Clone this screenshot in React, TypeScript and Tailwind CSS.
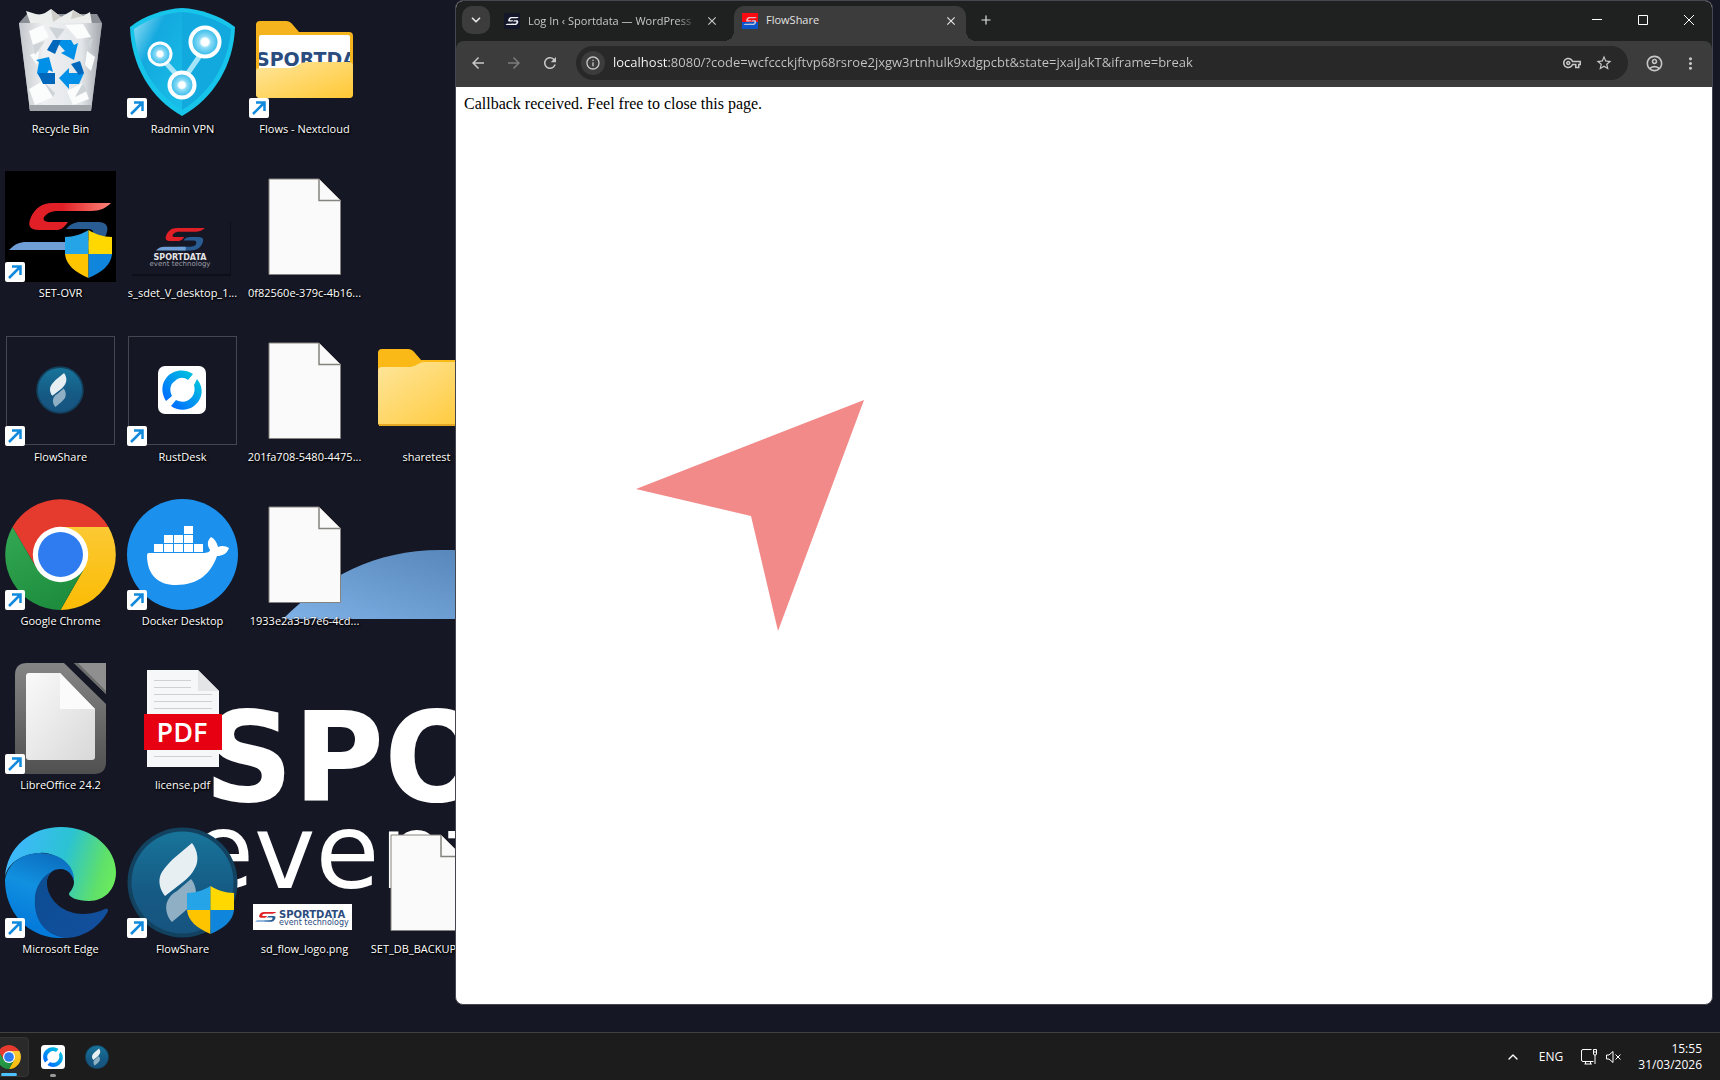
import type { ReactNode } from "react";
import {
  MdArrowBack,
  MdArrowForward,
  MdClose,
  MdInfoOutline,
  MdMoreVert,
  MdOutlineAccountCircle,
  MdOutlineVpnKey,
  MdRefresh,
  MdStarBorder,
} from "react-icons/md";
import { ChevronDown, ChevronUp, Plus } from "lucide-react";

const URL_TEXT =
  "localhost:8080/?code=wcfccckjftvp68rsroe2jxgw3rtnhulk9xdgpcbt&state=jxaiJakT&iframe=break";

/* ---------- shared drawings ---------- */

function SportMark({ red = "#e01f26", blue = "#2a5c94", tail = "#6f9fd6" }) {
  return (
    <>
      <path
        d="M106 0 H48 C36 0 30 6 26 14 C22 23 25 27 34 27 H52 C57 27 60 23 63 19 H44 C38 19 37 15 41 12 C44 9 48 8 52 8 H86 C95 8 101 5 106 0Z"
        fill={red}
      />
      <path
        d="M61 26 C66 21 69 19 76 19 H92 C103 19 104 25 101 32 C96 43 88 47 76 47 H50 V39 H76 C84 39 88 36 88 32 C89 28 87 26 83 26Z"
        fill={blue}
      />
      <path d="M4 47 C10 41 14 39 22 39 H66 V47Z" fill={tail} />
    </>
  );
}

function UacShield({ x, y }: { x: number; y: number }) {
  return (
    <g transform={`translate(${x} ${y})`}>
      <path d="M23.5 0 C17 4 9 7 0 7 V24 H23.5Z" fill="#25a5e8" />
      <path d="M23.5 0 C30 4 38 7 47 7 V24 H23.5Z" fill="#ffd800" />
      <path d="M0 24 H23.5 V48 C10 42 1 35 0 24Z" fill="#ffc400" />
      <path d="M47 24 H23.5 V48 C37 42 46 35 47 24Z" fill="#0f86dc" />
    </g>
  );
}

function Tile({ children }: { children: ReactNode }) {
  return (
    <svg viewBox="0 0 111 111" className="block size-full" aria-hidden="true">
      {children}
    </svg>
  );
}

/* ---------- desktop icons ---------- */

function RecycleBin() {
  return (
    <Tile>
      <defs>
        <linearGradient id="bin" x1="0" x2="1">
          <stop offset="0" stopColor="#c3c6cb" />
          <stop offset="0.3" stopColor="#eef0f2" />
          <stop offset="0.75" stopColor="#e3e6e9" />
          <stop offset="1" stopColor="#a2a6ac" />
        </linearGradient>
      </defs>
      <path d="M14 16 L22 7 H92 L97 16 L86 104 H25Z" fill="#8a8f96" />
      <path d="M21 4 L34 8 L40 6 L46 2 L56 10 L68 3 L78 9 L85 5 L87 17 L80 24 H28Z" fill="#eceeee" />
      <path d="M46 2 L56 10 L48 15Z M68 3 L78 9 L66 12Z" fill="#cfcdc8" />
      <path d="M14 16 H97 L86 104 H25Z" fill="url(#bin)" />
      <path
        d="M24 24 L38 18 L44 30 L28 38Z M60 18 L78 17 L86 30 L72 32Z M82 44 L90 50 L86 64 L80 58Z M24 82 L38 74 L48 90 L30 98Z M62 84 L78 76 L84 92 L68 98Z M25 48 L34 44 L32 58Z"
        fill="#fbfcfc"
      />
      <path
        d="M44 20 L60 22 L52 32Z M80 34 L88 32 L85 42Z M38 74 L50 86 L48 90Z M78 76 L70 90 L82 84Z M28 38 L40 34 L30 48Z"
        fill="#cdd3d6"
      />
      <path d="M24 98 H86 L86 104 H25Z" fill="#a0a5a9" />
      <path d="M50 33 H66 L69 38 L73 36 L69 53 L56 46 L60 44Z" fill="#0090e8" />
      <path d="M48 33 H56 L50 47 L42 43Z" fill="#0067bb" />
      <path d="M31 53 L44 50 L48 65 L44 63 L40 70 L43 77 H39 L32 66 L34 55Z" fill="#0090e8" />
      <path d="M33 66 H50 V77 H38Z" fill="#0067bb" />
      <path d="M54 71 L64 61 V66 H79 L74 77 H64 V82Z" fill="#0090e8" />
      <path d="M66 57 L75 54 L79 66 L74 68Z" fill="#0067bb" />
    </Tile>
  );
}

function RadminVpn() {
  return (
    <Tile>
      <defs>
        <linearGradient id="radmin" x1="0" y1="0" x2="1" y2="1">
          <stop offset="0" stopColor="#9fe4f8" />
          <stop offset="0.35" stopColor="#14a9df" />
          <stop offset="1" stopColor="#19bfe8" />
        </linearGradient>
        <radialGradient id="node">
          <stop offset="0" stopColor="#ffffff" />
          <stop offset="0.25" stopColor="#ffffff" />
          <stop offset="0.4" stopColor="#8fdcf6" />
          <stop offset="1" stopColor="#25b6e8" />
        </radialGradient>
      </defs>
      <path
        d="M55 1 C38 2 18 8 3 20 C4 58 24 92 55 109 C86 92 107 58 108 20 C92 8 73 2 55 1Z"
        fill="#17c5ea"
      />
      <path d="M55 5 C39 6 21 12 7 22 C9 56 27 86 55 103Z" fill="url(#radmin)" />
      <path d="M55 5 C71 6 90 12 104 22 C102 56 83 86 55 103Z" fill="#12a9df" />
      <path d="M39 56 L50 68 M72 50 L61 66" stroke="#a6e4f8" strokeWidth="5" />
      <circle cx="33" cy="47" r="11" fill="url(#node)" stroke="#fff" strokeWidth="3" />
      <circle cx="78" cy="35" r="14.5" fill="url(#node)" stroke="#fff" strokeWidth="4" />
      <circle cx="55" cy="78" r="12.5" fill="url(#node)" stroke="#fff" strokeWidth="4" />
    </Tile>
  );
}

function Folder({ preview = false }: { preview?: boolean }) {
  return (
    <Tile>
      <defs>
        <linearGradient id="folder" x1="0" y1="0" x2="1" y2="1">
          <stop offset="0" stopColor="#ffe69c" />
          <stop offset="1" stopColor="#ffc834" />
        </linearGradient>
        <clipPath id="folderPreview">
          <rect x="10" y="28" width="91" height="36" />
        </clipPath>
      </defs>
      <path
        d="M7 18 Q7 14 11 14 H37 Q41 14 44 18 L50 25 H100 Q104 25 104 29 V87 Q104 91 100 91 H11 Q7 91 7 87Z"
        fill={preview ? "#f5b31d" : "#fbb917"}
      />
      {preview ? (
        <>
          <rect x="10" y="28" width="91" height="40" rx="2" fill="#fff" />
          <text
            x="7"
            y="59"
            clipPath="url(#folderPreview)"
            className="fill-[#2b4c7e] font-['DejaVu_Sans'] text-[19px] font-bold"
          >
            SPORTDATA
          </text>
          <path
            d="M7 64 Q7 61 11 61 H40 Q45 61 49 58 Q53 55 58 55 H100 Q104 55 104 59 V87 Q104 91 100 91 H11 Q7 91 7 87Z"
            fill="url(#folder)"
          />
        </>
      ) : (
        <>
          <path
            d="M7 36 Q7 32 11 32 H39 Q43 32 47 29 Q50 27 54 27 H104 V87 Q104 91 100 91 H11 Q7 91 7 87Z"
            fill="url(#folder)"
          />
          <path d="M8 90 H103" stroke="#e5a823" strokeWidth="2" />
        </>
      )}
    </Tile>
  );
}

function SetOvr() {
  return (
    <Tile>
      <defs>
        <linearGradient id="setRed" x1="0" x2="1">
          <stop offset="0.4" stopColor="#e01f26" />
          <stop offset="1" stopColor="#ff8478" />
        </linearGradient>
      </defs>
      <rect width="111" height="111" fill="#000" />
      <g transform="translate(0 32)">
        <SportMark red="url(#setRed)" />
      </g>
      <UacShield x={60} y={59} />
    </Tile>
  );
}

function SportCard() {
  return (
    <Tile>
      <rect x="5" y="51" width="99" height="54" fill="#0e0f19" />
      <rect x="3" y="49" width="100" height="54" fill="#151724" />
      <g transform="translate(27 57) scale(0.48)">
        <SportMark />
      </g>
      <text x="53" y="89" textAnchor="middle" className="fill-zinc-200 font-['DejaVu_Sans'] text-[8px] font-bold">
        SPORTDATA
      </text>
      <text x="53" y="95" textAnchor="middle" className="fill-zinc-400 font-['DejaVu_Sans'] text-[7px]">
        event technology
      </text>
    </Tile>
  );
}

function BlankFile() {
  return (
    <Tile>
      <path d="M20 8 H70 L91.5 29.5 V103.5 H20Z" fill="#fafafa" stroke="#85837f" />
      <path d="M70 8 V29.5 H91.5" fill="#fafafa" stroke="#85837f" strokeWidth="1.5" />
    </Tile>
  );
}

function FlowShareDisc() {
  return (
    <>
      <circle cx="55.5" cy="55.5" r="55" fill="#12425f" />
      <circle cx="55.5" cy="55.5" r="51" fill="url(#flowDisc)" />
      <path d="M65 16 C71 24 72 34 68 41 C65 47 61 51 56 55 L38 69 C33 63 30 53 35 45 C38 40 42 36 46 32Z" fill="#e8eff3" />
      <path d="M64 52 C69 58 70 66 68 72 C66 77 62 80 58 84 L45 95 C40 90 37 80 41 73 C43 69 46 66 50 64Z" fill="#8fb0c4" />
      <defs>
        <linearGradient id="flowDisc" x1="0" y1="0" x2="0" y2="1">
          <stop offset="0" stopColor="#18749a" />
          <stop offset="0.6" stopColor="#155a84" />
          <stop offset="1" stopColor="#175480" />
        </linearGradient>
      </defs>
    </>
  );
}

function RustDeskLogo() {
  return (
    <>
      <defs>
        <linearGradient id="rust" x1="0" y1="1" x2="1" y2="0">
          <stop offset="0.1" stopColor="#0071ff" />
          <stop offset="1" stopColor="#00c6dc" />
        </linearGradient>
      </defs>
      <rect width="48" height="48" rx="7" fill="#fff" />
      <path
        d="M39 13 C47 23 44 34 36 40 C29 45 20 45 13 40 L18 34 C24 37 30 36 34 31 C37 27 37 23 36 19Z"
        fill="url(#rust)"
      />
      <path
        d="M35 8 C26 2 15 4 9 11 C3 18 3 27 8 35 L14 30 C11 24 12 18 17 15 C21 11 26 11 30 14Z"
        fill="url(#rust)"
      />
    </>
  );
}

function ChromeLogo() {
  return (
    <>
      <defs>
        <linearGradient id="chromeGreen" x1="0" y1="0" x2="0.5" y2="1">
          <stop offset="0" stopColor="#34a853" />
          <stop offset="1" stopColor="#1e8e3e" />
        </linearGradient>
        <linearGradient id="chromeYellow" x1="0" y1="0" x2="0" y2="1">
          <stop offset="0" stopColor="#fcc934" />
          <stop offset="1" stopColor="#fbbc04" />
        </linearGradient>
      </defs>
      <path d="M7.5 28 A55.5 55.5 0 0 1 103.5 28 L55.5 28 L31.7 69.3Z" fill="#e53b2e" />
      <path d="M55.5 28 H103.5 A55.5 55.5 0 0 1 55.5 111 L79.3 69.3Z" fill="url(#chromeYellow)" />
      <path d="M7.5 28 L31.7 69.3 H79.3 L55.5 111 A55.5 55.5 0 0 1 7.5 28Z" fill="url(#chromeGreen)" />
      <circle cx="55.5" cy="55.5" r="27.7" fill="#fff" />
      <circle cx="55.5" cy="55.5" r="22.5" fill="#2f7cf0" />
    </>
  );
}

function Docker() {
  const boxes = [
    [57, 27], [37, 36], [47, 36], [57, 36],
    [27, 45], [37, 45], [47, 45], [57, 45], [67, 45],
  ];
  return (
    <Tile>
      <circle cx="55.5" cy="55.5" r="55.5" fill="#1c90ed" />
      {boxes.map(([x, y]) => (
        <rect key={`${x}-${y}`} x={x} y={y} width="9" height="8" fill="#fff" />
      ))}
      <path
        d="M20 56 Q20 54 22 54 H76 C80 54 83 53 83 51 C80 46 80 42 84 38 C88 40 90 44 91 48 C95 46 99 47 102 49 C100 55 95 57 90 57 C84 74 72 86 49 86 C31 86 20 76 20 56Z"
        fill="#fff"
      />
    </Tile>
  );
}

function LibreOffice() {
  return (
    <Tile>
      <defs>
        <linearGradient id="libre" x1="0" y1="0" x2="0" y2="1">
          <stop offset="0" stopColor="#858585" />
          <stop offset="1" stopColor="#505050" />
        </linearGradient>
        <linearGradient id="librePage" x1="0" y1="0" x2="1" y2="1">
          <stop offset="0" stopColor="#fafafa" />
          <stop offset="1" stopColor="#d8d8d8" />
        </linearGradient>
      </defs>
      <path d="M22 0 H59 L101 41 V99 Q101 111 89 111 H22 Q10 111 10 99 V12 Q10 0 22 0Z" fill="url(#libre)" />
      <path d="M69 0 H101 V31Z" fill="#8f8f8f" />
      <path d="M69 0 L101 31 V28 L73 0Z" fill="#6b6b6b" />
      <path d="M24 10 H55 L90 46 V94 Q90 97 87 97 H24 Q21 97 21 94 V13 Q21 10 24 10Z" fill="url(#librePage)" />
      <path d="M55 10 V46 H90Z" fill="#fbfbfb" />
    </Tile>
  );
}

function PdfFile() {
  return (
    <Tile>
      <path d="M20 7 H71 L92 28 V104 H20Z" fill="#f6f7f8" />
      <path d="M71 7 V28 H92Z" fill="#e3e5e7" />
      <path d="M27 17.5 H64 M27 24.5 H64 M27 31.5 H85 M27 38.5 H85 M27 45.5 H85 M27 93.5 H85" stroke="#cdd1d4" />
      <rect x="17" y="51" width="78" height="36" fill="#e60012" />
      <text x="55" y="79" textAnchor="middle" className="fill-white font-['Open_Sans'] text-[27px] font-semibold">
        PDF
      </text>
    </Tile>
  );
}

function EdgeLogo() {
  return (
    <Tile>
      <defs>
        <linearGradient id="edgeTop" x1="0" y1="0.5" x2="1" y2="0.7">
          <stop offset="0" stopColor="#3fb8ff" />
          <stop offset="0.5" stopColor="#2bc3d2" />
          <stop offset="0.85" stopColor="#5fe06a" />
          <stop offset="1" stopColor="#6cec5c" />
        </linearGradient>
        <linearGradient id="edgeBlue" x1="0.6" y1="0" x2="0.3" y2="1">
          <stop offset="0" stopColor="#0c6fc0" />
          <stop offset="0.4" stopColor="#1190e0" />
          <stop offset="1" stopColor="#0074d8" />
        </linearGradient>
        <linearGradient id="edgeDark" x1="0" y1="0" x2="1" y2="1">
          <stop offset="0" stopColor="#0b4d92" />
          <stop offset="1" stopColor="#134f9e" />
        </linearGradient>
      </defs>
      <path
        d="M0 50 C2 20 26 0 56 0 C88 0 111 22 111 45 C111 62 100 74 84 74 C72 74 64 70 64 67 C64 65 69 62 69 55 C69 40 50 24 35 26 C18 27 3 35 0 50Z"
        fill="url(#edgeTop)"
      />
      <path
        d="M0 53 C3 35 18 26 35 26 C55 26 70 38 69 54 C66 44 60 42 55 42 C46 42 40 50 42 60 C36 80 42 98 60 111 C25 113 0 87 0 53Z"
        fill="url(#edgeBlue)"
      />
      <path
        d="M55 42 C46 41 41 49 42 58 C44 75 60 87 78 87 C88 87 95 84 100 82 C103 81 104 83 102 86 C92 103 75 111 60 111 C38 108 28 90 30 70 C31 58 40 44 55 42Z"
        fill="url(#edgeDark)"
      />
    </Tile>
  );
}

function FlowLogoPng() {
  return (
    <Tile>
      <rect x="4" y="77" width="99" height="26" fill="#fff" />
      <g transform="translate(5 85) scale(0.21)">
        <SportMark />
      </g>
      <text x="30" y="91" className="fill-[#2b4c7e] font-['DejaVu_Sans'] text-[10px] font-bold">
        SPORTDATA
      </text>
      <text x="30" y="98" className="fill-[#2b4c7e] font-['DejaVu_Sans'] text-[8px]">
        event technology
      </text>
    </Tile>
  );
}

type DesktopItem = { label: string; icon: ReactNode; shortcut?: boolean; framed?: boolean };

const items: (DesktopItem | null)[] = [
  { label: "Recycle Bin", icon: <RecycleBin /> },
  { label: "Radmin VPN", icon: <RadminVpn />, shortcut: true },
  { label: "Flows - Nextcloud", icon: <Folder preview />, shortcut: true },
  null,
  { label: "SET-OVR", icon: <SetOvr />, shortcut: true },
  { label: "s_sdet_V_desktop_1...", icon: <SportCard /> },
  { label: "0f82560e-379c-4b16...", icon: <BlankFile /> },
  null,
  {
    label: "FlowShare",
    icon: (
      <Tile>
        <g transform="translate(31 31) scale(0.432)">
          <FlowShareDisc />
        </g>
      </Tile>
    ),
    shortcut: true,
    framed: true,
  },
  {
    label: "RustDesk",
    icon: (
      <Tile>
        <g transform="translate(31 31)">
          <RustDeskLogo />
        </g>
      </Tile>
    ),
    shortcut: true,
    framed: true,
  },
  { label: "201fa708-5480-4475...", icon: <BlankFile /> },
  { label: "sharetest", icon: <Folder /> },
  { label: "Google Chrome", icon: <Tile><ChromeLogo /></Tile>, shortcut: true },
  { label: "Docker Desktop", icon: <Docker />, shortcut: true },
  { label: "1933e2a3-b7e6-4cd...", icon: <BlankFile /> },
  null,
  { label: "LibreOffice 24.2", icon: <LibreOffice />, shortcut: true },
  { label: "license.pdf", icon: <PdfFile /> },
  null,
  null,
  { label: "Microsoft Edge", icon: <EdgeLogo />, shortcut: true },
  {
    label: "FlowShare",
    icon: (
      <Tile>
        <FlowShareDisc />
        <UacShield x={60} y={59} />
      </Tile>
    ),
    shortcut: true,
  },
  { label: "sd_flow_logo.png", icon: <FlowLogoPng /> },
  { label: "SET_DB_BACKUP_20...", icon: <BlankFile /> },
];

function DesktopIcon({ label, icon, shortcut, framed }: DesktopItem) {
  return (
    <button type="button" className="flex flex-col items-center gap-[3px]">
      <span className="relative size-[111px]">
        {framed && <span className="absolute inset-px border border-[#454650]" />}
        {icon}
        {shortcut && (
          <span className="absolute bottom-0 left-0 grid size-5 place-items-center rounded-xs bg-white">
            <svg viewBox="0 0 20 20" className="size-5" fill="none" stroke="#1189dc" strokeWidth="2.5">
              <path d="M4 16 L15.5 4.5 M7 4.5 H15.5 V13" />
            </svg>
          </span>
        )}
      </span>
      <span className="text-[11px] leading-4 whitespace-nowrap text-white [text-shadow:1px_1px_2px_#000,0_1px_2px_#000]">
        {label}
      </span>
    </button>
  );
}

function Wallpaper() {
  return (
    <svg className="absolute inset-0 size-full" aria-hidden="true">
      <defs>
        <linearGradient id="swoosh" x1="0" y1="1" x2="1" y2="0">
          <stop offset="0" stopColor="#80b1e6" />
          <stop offset="1" stopColor="#5484b8" />
        </linearGradient>
      </defs>
      <path d="M283 619 C325 577 375 550 440 550 H480 V619Z" fill="url(#swoosh)" />
      <text x="204" y="801" className="fill-white font-['DejaVu_Sans'] text-[124px] font-bold">
        SPORTDATA
      </text>
      <text x="190" y="888" className="fill-white font-['DejaVu_Sans'] text-[104px]">
        event technology
      </text>
    </svg>
  );
}

/* ---------- browser window ---------- */

function Favicon({ active = false }: { active?: boolean }) {
  return (
    <svg viewBox="0 0 16 16" className="size-4 shrink-0" aria-hidden="true">
      <rect width="16" height="16" rx={active ? 0 : 2} fill={active ? "#fb0a12" : "#14162a"} />
      {active && <path d="M0 9 H16 V16 H0Z" fill="#0b53c8" />}
      <g transform="translate(1 4) scale(0.13 0.17)">
        <SportMark
          red={active ? "#e8b9bd" : "#f4f4f6"}
          blue={active ? "#b9c6de" : "#f4f4f6"}
          tail={active ? "#b9c6de" : "#f4f4f6"}
        />
      </g>
    </svg>
  );
}

function TabStrip() {
  return (
    <div className="flex h-10 items-stretch bg-[#1f2120] pl-1.5 text-[#e3e3e3]">
      <button type="button" aria-label="Search tabs" className="mt-[5px] grid size-7 shrink-0 place-items-center rounded-[10px] bg-[#3c3c3c]">
        <ChevronDown className="size-3.5" strokeWidth={3} />
      </button>
      <div className="flex w-[244px] items-center gap-2 pt-px pr-[15px] pb-px pl-3.5 text-[#c7c7c7]">
        <Favicon />
        <span className="flex-1 overflow-hidden text-[11px] whitespace-nowrap [mask-image:linear-gradient(to_right,#000_88%,transparent)]">
          Log In ‹ Sportdata — WordPress
        </span>
        <button type="button" aria-label="Close tab">
          <MdClose className="size-3.5" />
        </button>
      </div>
      <div className="relative mt-[5px] flex w-[232px] items-center gap-2 rounded-t-[10px] bg-[#3c3c3c] pr-2 pb-1.5 pl-2">
        <span className="absolute bottom-0 -left-2.5 size-2.5 bg-[radial-gradient(circle_at_0_0,#1f2120_10px,#3c3c3c_10px)]" />
        <span className="absolute -right-2.5 bottom-0 size-2.5 bg-[radial-gradient(circle_at_100%_0,#1f2120_10px,#3c3c3c_10px)]" />
        <Favicon active />
        <span className="flex-1 text-[11px]">FlowShare</span>
        <button type="button" aria-label="Close tab">
          <MdClose className="size-3.5" />
        </button>
      </div>
      <button type="button" aria-label="New tab" className="ml-1.5 grid w-7 place-items-center pb-0.5">
        <Plus className="size-3.5" strokeWidth={2} />
      </button>
      <div className="ml-auto flex text-white">
        {[
          { name: "Minimize", d: "M0 4.5 H10" },
          { name: "Maximize", d: "M0.5 0.5 H9.5 V9.5 H0.5Z" },
          { name: "Close", d: "M0 0 L10 10 M10 0 L0 10" },
        ].map((b) => (
          <button key={b.name} type="button" aria-label={b.name} className="grid w-[46px] place-items-center pb-0.5">
            <svg viewBox="0 0 10 10" className="size-2.5" fill="none" stroke="currentColor">
              <path d={b.d} />
            </svg>
          </button>
        ))}
      </div>
    </div>
  );
}

function Toolbar() {
  return (
    <div className="bg-[#1f2120]">
      <div className="flex h-[46px] items-center rounded-t-lg bg-[#3c3c3c] pb-0.5 pl-1 text-[#c7c7c7]">
        <button type="button" aria-label="Back" className="grid w-9 place-items-center">
          <MdArrowBack className="size-[18px]" />
        </button>
        <button type="button" aria-label="Forward" className="grid w-9 place-items-center text-[#7c7c7c]">
          <MdArrowForward className="size-[18px]" />
        </button>
        <button type="button" aria-label="Reload" className="grid w-9 place-items-center">
          <MdRefresh className="size-[18px]" />
        </button>
        <div className="ml-2 flex h-[34px] flex-1 items-center rounded-full bg-[#282828] px-[5px]">
          <button type="button" aria-label="Site information" className="grid size-6 place-items-center rounded-full bg-[#3c3c3c]">
            <MdInfoOutline className="size-4" />
          </button>
          <input
            type="text"
            aria-label="Address"
            defaultValue={URL_TEXT}
            className="ml-2 min-w-0 flex-1 bg-linear-to-r from-white from-[56px] to-[#c7c7c7] to-[56px] bg-clip-text text-[13px] text-transparent outline-none"
          />
          <button type="button" aria-label="Passwords" className="grid w-8 place-items-center">
            <MdOutlineVpnKey className="size-[18px]" />
          </button>
          <button type="button" aria-label="Bookmark" className="mr-[3px] grid w-8 place-items-center">
            <MdStarBorder className="size-[18px]" />
          </button>
        </div>
        <button type="button" aria-label="Profile" className="ml-2 grid w-9 place-items-center">
          <MdOutlineAccountCircle className="size-[19px]" />
        </button>
        <button type="button" aria-label="Menu" className="mr-1 grid w-9 place-items-center">
          <MdMoreVert className="size-[19px]" />
        </button>
      </div>
    </div>
  );
}

function BrowserWindow() {
  return (
    <section className="absolute top-0 right-[7px] bottom-[27px] left-[455px] flex flex-col overflow-hidden rounded-lg border border-[#45464f] bg-white">
      <TabStrip />
      <Toolbar />
      <main className="relative flex-1 p-2">
        <p className="font-['Liberation_Serif',serif] text-base leading-[18px] text-black">
          Callback received. Feel free to close this page.
        </p>
        <svg viewBox="0 0 228 231" className="absolute top-[313px] left-[180px] w-[228px]" aria-hidden="true">
          <path d="M228 0 L0 89 L115 116 L142 231Z" fill="#f28a89" />
        </svg>
      </main>
    </section>
  );
}

/* ---------- taskbar ---------- */

function Taskbar() {
  return (
    <footer className="flex h-12 items-center justify-between overflow-hidden border-t border-[#414141] bg-[#1c1c1c] text-white">
      <nav className="-ml-[11px] flex gap-1">
        <button type="button" aria-label="Google Chrome" className="relative grid size-10 place-items-center rounded-sm border border-[#353535] bg-[#2a2a2a]">
          <svg viewBox="0 0 111 111" className="size-6">
            <ChromeLogo />
          </svg>
          <span className="absolute bottom-0 h-[3px] w-4 rounded-full bg-[#4cc2ff]" />
        </button>
        <button type="button" aria-label="RustDesk" className="relative grid size-10 place-items-center">
          <svg viewBox="0 0 48 48" className="size-6">
            <RustDeskLogo />
          </svg>
          <span className="absolute bottom-0 h-[3px] w-1.5 rounded-full bg-[#9a9a9a]" />
        </button>
        <button type="button" aria-label="FlowShare" className="grid size-10 place-items-center">
          <svg viewBox="0 0 111 111" className="size-6">
            <FlowShareDisc />
          </svg>
        </button>
      </nav>
      <div className="flex items-center pr-[18px] text-[11px]">
        <button type="button" aria-label="Show hidden icons">
          <ChevronUp className="size-4" />
        </button>
        <button type="button" className="ml-[18px] text-xs">ENG</button>
        <button type="button" aria-label="Network and volume" className="ml-[18px] flex items-center gap-2">
          <svg viewBox="0 0 17 17" className="size-[17px]" fill="none" stroke="currentColor">
            <path d="M10.5 1.5 H2 Q0.5 1.5 0.5 3 V12 Q0.5 13.5 2 13.5 H12.5 M4.5 13.5 V16 M9.5 13.5 V16 M3.5 16 H11 M12.5 1.5 H15.5 V6 Q15.5 7 14 7 Q12.5 7 12.5 6Z M14 7 V16 M12.5 4 H15.5" />
          </svg>
          <svg viewBox="0 0 16 14" className="h-3.5 w-4" fill="none" stroke="currentColor">
            <path d="M0.5 5 H3 L7 1.5 V12.5 L3 9 H0.5Z M9.5 4.5 L14.5 9.5 M14.5 4.5 L9.5 9.5" />
          </svg>
        </button>
        <button type="button" className="ml-4 text-right text-xs leading-4">
          <time className="block">15:55</time>
          <time className="block">31/03/2026</time>
        </button>
      </div>
    </footer>
  );
}

export default function App() {
  return (
    <div className="flex min-h-screen flex-col bg-[#151724] font-['Open_Sans','Noto_Sans',sans-serif]">
      <div className="relative flex-1 overflow-hidden">
        <Wallpaper />
        <div className="relative grid auto-rows-[164px] grid-cols-[repeat(4,121px)] gap-x-px pt-[7px]">
          {items.map((item, i) => (item ? <DesktopIcon key={i} {...item} /> : <span key={i} />))}
        </div>
        <BrowserWindow />
      </div>
      <Taskbar />
    </div>
  );
}
